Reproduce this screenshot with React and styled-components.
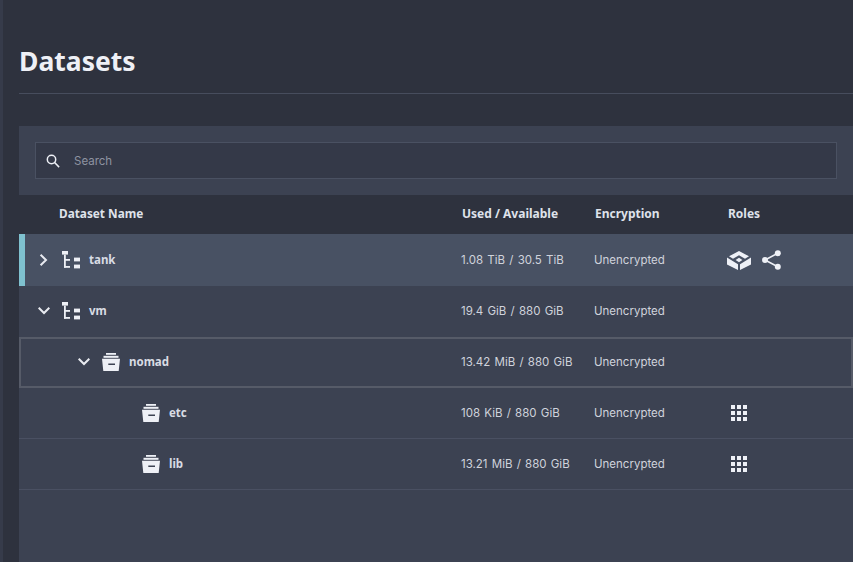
import React from 'react';
import styled, { createGlobalStyle } from 'styled-components';

const Global = createGlobalStyle`
  html, body { margin: 0; padding: 0; height: 100%; background: #2e323e; overflow: hidden; }
  body { font-family: "Noto Sans", "Open Sans", sans-serif; }
`;

const Shell = styled.div`display: flex; width: 853px; height: 562px; overflow: hidden;`;
const Rail = styled.div`width: 3px; flex: none; background: #363b4a;`;
const Main = styled.main`flex: 1; min-width: 0; padding-left: 16px; display: flex; flex-direction: column;`;
const Header = styled.header`height: 94px; box-sizing: border-box; padding-top: 41px; border-bottom: 1px solid #474d5d;`;
const Title = styled.h1`margin: 0; font-size: 26.5px; line-height: 40px; font-weight: 700; color: #eef0f6;`;
const Card = styled.section`margin-top: 32px; flex: 1; background: #3c4252; display: flex; flex-direction: column;`;
const SearchBar = styled.div`height: 69px; box-sizing: border-box; padding: 16px;`;
const SearchBox = styled.div`
  height: 37px; box-sizing: border-box; display: flex; align-items: center; gap: 14px; padding-left: 10px;
  background: #343948; border: 1px solid #4a5162; color: #8e93a1; font-family: Inter, sans-serif; font-size: 11.5px;
`;
const HeadRow = styled.div`
  display: grid; grid-template-columns: 443px 133px 133px 1fr; align-items: center;
  height: 39px; padding-bottom: 2px; box-sizing: border-box; background: #2e323e; color: #dfe2ea; font-size: 12px; font-weight: 700;
`;
const HeadName = styled.div`padding-left: 40px; font-size: 11.8px; line-height: 15px;`;
const HeadCell = styled.div`line-height: 15px;`;
const BodyRow = styled.div`
  display: grid; align-items: center; box-sizing: border-box;
  height: ${p => p.$h}px;
  background: ${p => (p.$selected ? '#485163' : 'transparent')};
  border-left: ${p => (p.$selected ? '6px solid #7fc1cf' : 'none')};
  border-bottom: ${p => (p.$selected ? 'none' : `1px solid ${p.$line ? '#4a5062' : 'transparent'}`)};
  outline: ${p => (p.$focus ? '2px solid #565b68' : 'none')};
  outline-offset: -2px;
  grid-template-columns: ${p => (p.$selected ? '436px 133px 133px' : '442px 133px 134px')} 1fr;
  font-size: 11.5px; color: #d8dbe3;
`;
const NameCell = styled.div`
  display: flex; align-items: center; padding-left: ${p => p.$indent}px;
  font-weight: 700; color: #d9dce4;
`;
const NameText = styled.span`position: relative; top: -1px;`;
const Chevron = styled.span`width: 12px; height: 12px; display: flex; margin-right: 12px; color: #e8eaf0;`;
const IconWrap = styled.span`display: flex; margin-right: 9px; color: #eef0f6;`;
const ValueCell = styled.div`font-family: Inter, sans-serif; font-size: 11.5px; word-spacing: 1px; color: #d0d3dc;`;
const Roles = styled.div`display: flex; align-items: center; gap: 11px; color: #eef0f6; padding-left: ${p => p.$pad}px;`;

const Right = () => <svg width="12" height="12" viewBox="0 0 12 12" fill="none" stroke="currentColor" strokeWidth="2"><path d="M2.6 .7 8 6 2.6 11.3" /></svg>;
const Down = () => <svg width="12" height="12" viewBox="0 0 12 12" fill="none" stroke="currentColor" strokeWidth="2"><path d="M.7 2.8 6 8 11.3 2.8" /></svg>;
const TreeIcon = () => <svg width="18" height="18" viewBox="0 0 18 18" fill="currentColor">
  <rect x="0" y="0" width="6" height="3.6" /><rect x="2" y="3.6" width="1.8" height="13" /><rect x="2" y="8" width="6" height="1.8" /><rect x="2" y="15" width="6" height="1.8" />
  <rect x="12" y="6.6" width="6" height="3.8" /><rect x="12" y="13.6" width="6" height="3.8" />
</svg>;
const Bin = () => <svg width="18" height="18" viewBox="0 0 18 18" fill="currentColor">
  <rect x="4" y="0" width="10" height="1.8" /><rect x="1.5" y="2.8" width="15" height="2" />
  <path fillRule="evenodd" d="M0 5.8h18L16.7 18H1.3zM6.3 10.5V12H13V10.5z" />
</svg>;
const Grid3 = () => <svg width="16" height="16" viewBox="0 0 16 16" fill="currentColor">
  {[0, 6, 12].flatMap(y => [0, 6, 12].map(x => <rect key={`${x}-${y}`} x={x} y={y} width="4" height="4" />))}
</svg>;
const Box = () => <svg width="24" height="19" viewBox="0 0 24 19" fill="currentColor">
  <path d="M12 0 22 5.3 18 7.8 12 4.2 6 7.8 2 5.3z" /><path d="M12 6.8 15.4 9 12 11.2 8.6 9z" />
  <path d="M0 6.6 11 13.2V19L0 13.6z" /><path d="M24 6.6 13 13.2V19L24 13.6z" />
</svg>;
const Share = () => <svg width="19" height="20" viewBox="0 0 19 20" fill="currentColor" stroke="currentColor">
  <circle cx="15.8" cy="3.2" r="3" stroke="none" /><circle cx="3" cy="10" r="3" stroke="none" /><circle cx="15.8" cy="16.8" r="3" stroke="none" />
  <path d="M15.8 3.2 3 10 15.8 16.8" fill="none" strokeWidth="1.6" />
</svg>;
const Search = () => <svg width="14" height="14" viewBox="0 0 16 16" fill="none" stroke="#eef0f6" strokeWidth="1.7"><circle cx="6.3" cy="6.3" r="4.8" /><path d="M9.8 9.8 15 15" /></svg>;

const rows = [
  { name: 'tank', used: '1.08 TiB / 30.5 TiB', selected: true, indent: 13, chevron: 'right', icon: 'tree', roles: 'shared', h: 52 },
  { name: 'vm', used: '19.4 GiB / 880 GiB', indent: 19, chevron: 'down', icon: 'tree', h: 51 },
  { name: 'nomad', used: '13.42 MiB / 880 GiB', focus: true, indent: 59, chevron: 'down', icon: 'bin', h: 51 },
  { name: 'etc', used: '108 KiB / 880 GiB', indent: 123, icon: 'bin', roles: 'grid', h: 51, line: true },
  { name: 'lib', used: '13.21 MiB / 880 GiB', indent: 123, icon: 'bin', roles: 'grid', h: 51, line: true },
];

export default function App() {
  return (
    <Shell>
      <Global />
      <Rail />
      <Main>
        <Header><Title>Datasets</Title></Header>
        <Card>
          <SearchBar>
            <SearchBox><Search /><span>Search</span></SearchBox>
          </SearchBar>
          <HeadRow>
            <HeadName>Dataset Name</HeadName>
            <HeadCell>Used / Available</HeadCell>
            <HeadCell>Encryption</HeadCell>
            <HeadCell>Roles</HeadCell>
          </HeadRow>
          {rows.map(r => (
            <BodyRow key={r.name} $selected={r.selected} $focus={r.focus} $h={r.h} $line={r.line}>
              <NameCell $indent={r.indent}>
                {r.chevron && <Chevron>{r.chevron === 'right' ? <Right /> : <Down />}</Chevron>}
                <IconWrap>{r.icon === 'tree' ? <TreeIcon /> : <Bin />}</IconWrap>
                <NameText>{r.name}</NameText>
              </NameCell>
              <ValueCell>{r.used}</ValueCell>
              <ValueCell>Unencrypted</ValueCell>
              <Roles $pad={r.roles === 'shared' ? 0 : 3}>
                {r.roles === 'shared' && <><Box /><Share /></>}
                {r.roles === 'grid' && <Grid3 />}
              </Roles>
            </BodyRow>
          ))}
        </Card>
      </Main>
    </Shell>
  );
}
